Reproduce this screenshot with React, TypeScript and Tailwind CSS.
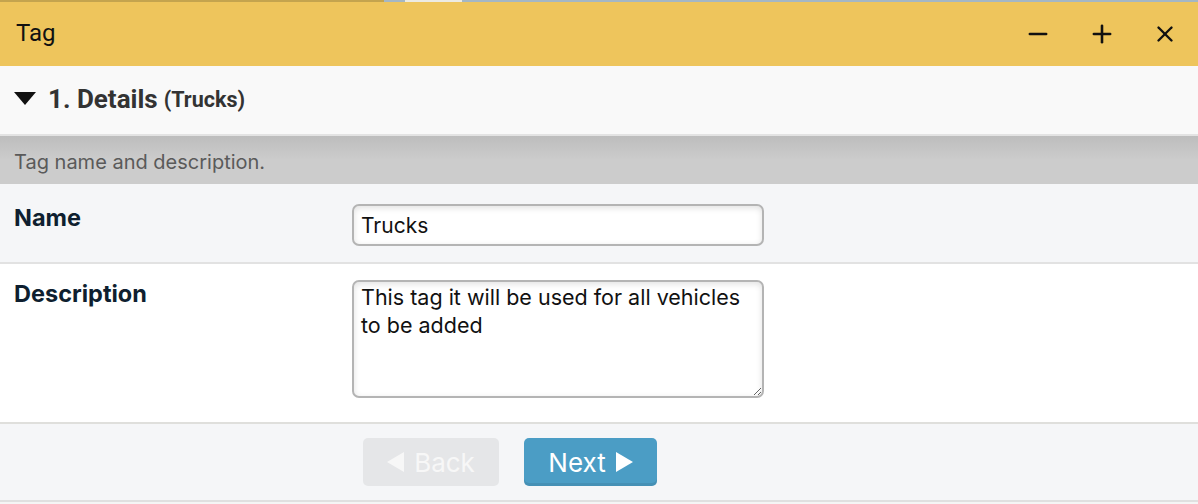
import { Minus, Plus, X } from "lucide-react"

export default function App() {
  return (
    <div className="w-[1198px] h-[504px] overflow-hidden bg-[#f5f5f5] font-['Inter',sans-serif]">
      {/* window tabs strip */}
      <div className="flex h-[2px]">
        <div className="w-[384px] bg-[#c4a44e]" />
        <div className="w-[21px] bg-[#a4b7c4]" />
        <div className="w-[57px] bg-[#ecebe3]" />
        <div className="flex-1 bg-[#a4b7c4]" />
      </div>

      {/* title bar */}
      <div className="h-[64px] bg-[#eec55c] flex items-center justify-between pl-4 pr-[20px]">
        <span className="text-[24px] text-[#111] font-['Roboto',sans-serif] mt-[-2px]">Tag</span>
        <div className="flex items-center gap-[36px] text-[#111]">
          <Minus className="w-[28px] h-[28px]" strokeWidth={2.2} />
          <Plus className="w-[28px] h-[28px]" strokeWidth={2.2} />
          <X className="w-[26px] h-[26px]" strokeWidth={2.2} />
        </div>
      </div>

      {/* section header */}
      <div className="h-[70px] bg-[#f9f9f9] flex items-center pl-[14px] border-b-2 border-[#e3e3e3]">
        <svg width="22" height="14" viewBox="0 0 22 14" className="mr-[12px] mt-[-3px]">
          <polygon points="0,0 22,0 11,13" fill="#111" />
        </svg>
        <span className="text-[26px] font-bold text-[#333] font-['Roboto',sans-serif] mt-[-2px]">1. Details</span>
        <span className="ml-[6px] text-[21.5px] font-bold text-[#333] font-['Roboto',sans-serif]">(Trucks)</span>
      </div>

      {/* hint */}
      <div className="h-[48px] bg-gradient-to-b from-[#bdbdbd] via-[#cccccc] to-[#cccccc] flex items-center pl-[14px]">
        <span className="text-[20px] text-[#5a5a5a] mt-[4px]">Tag name and description.</span>
      </div>

      {/* name row */}
      <div className="h-[80px] bg-[#f5f6f8] border-b-2 border-[#e2e2e2] flex">
        <div className="w-[352px] pl-[14px] pt-[16px] text-[23.5px] font-bold text-[#0f1f30]">Name</div>
        <div className="pt-[20px]">
          <input
            defaultValue="Trucks"
            className="w-[412px] h-[42px] rounded-[7px] border-2 border-[#b4b4b4] bg-white px-[7px] text-[21px] text-[#111] shadow-[inset_0_2px_6px_rgba(0,0,0,0.12)] outline-none"
          />
        </div>
      </div>

      {/* description row */}
      <div className="h-[160px] bg-white border-b-2 border-[#dfdfdc] flex">
        <div className="w-[352px] pl-[14px] pt-[12px] text-[23.5px] font-bold text-[#0f1f30]">Description</div>
        <div className="pt-[16px]">
          <textarea
            defaultValue="This tag it will be used for all vehicles to be added"
            className="block w-[412px] h-[118px] rounded-[7px] border-2 border-[#b4b4b4] bg-white px-[7px] py-[1px] text-[21.5px] leading-[28px] text-[#111] shadow-[inset_0_2px_6px_rgba(0,0,0,0.12)] outline-none resize-y"
          />
        </div>
      </div>

      {/* buttons */}
      <div className="h-[78px] bg-[#f5f6f8] border-b-2 border-[#e0e0e0] flex items-center pl-[363px] gap-[25px]">
        <button className="w-[136px] h-[48px] rounded-[5px] bg-[#e5e6e8] text-[#f7f7f7] text-[26px] flex items-center justify-center gap-[10px]">
          <svg width="17" height="20" viewBox="0 0 17 20">
            <polygon points="17,0 17,20 0,10" fill="#f7f7f7" />
          </svg>
          Back
        </button>
        <button className="w-[133px] h-[48px] rounded-[5px] bg-[#4b9dc5] shadow-[inset_0_-3px_0_rgba(0,0,0,0.08)] text-white text-[26px] flex items-center justify-center gap-[10px]">
          Next
          <svg width="17" height="20" viewBox="0 0 17 20">
            <polygon points="0,0 0,20 17,10" fill="#fff" />
          </svg>
        </button>
      </div>
    </div>
  )
}
